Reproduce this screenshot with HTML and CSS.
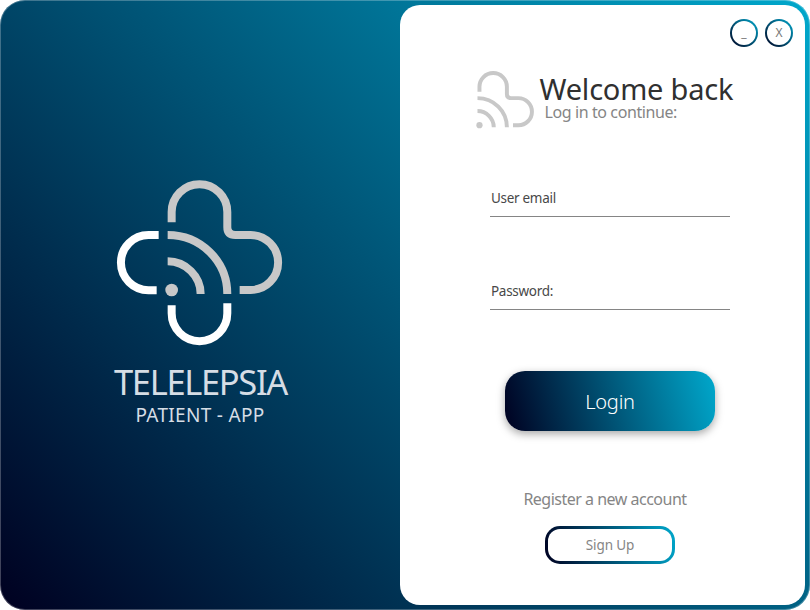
FILE: index.html
```
<!DOCTYPE html>
<html lang="en">
<head>
<meta charset="utf-8">
<title>Telelepsia</title>
<link rel="stylesheet" href="styles.css">
</head>
<body>
<svg width="0" height="0" class="defs">
  <symbol id="mark" viewBox="0 0 350 350" overflow="visible">
    <g fill="none" stroke="currentColor" stroke-width="24">
      <path d="M15 127V96A83.500 83.500 0 0 1 182 96V142Q182 165 206 165H252A82.500 82.500 0 0 1 252 330H219"/>
      <path d="M3 165C102 165 182 243 182 342"/>
      <path d="M3 244C57 244 102 289 102 342"/>
    </g>
    <circle cx="15" cy="330" r="19" fill="currentColor"/>
  </symbol>
</svg>
<div class="window">
  <section class="brand">
    <svg class="logo" viewBox="52 44 496 496">
      <g fill="none" stroke="#fff" stroke-width="24">
        <path d="M177 209H146.500A82.500 82.500 0 0 0 146.500 374.500H171"/>
        <path d="M216 420V444A83.500 83.500 0 0 0 383 444V414"/>
      </g>
      <g class="signal"><use href="#mark" x="201" y="44" width="350" height="350"/></g>
    </svg>
    <h1>TELELEPSIA</h1>
    <p>PATIENT - APP</p>
  </section>
  <main class="panel">
    <div class="controls">
      <button class="circle minimize"><span>_</span></button>
      <button class="circle close"><span>X</span></button>
    </div>
    <header class="welcome">
      <svg class="mini"><use href="#mark"/></svg>
      <div>
        <h2>Welcome back</h2>
        <p>Log in to continue:</p>
      </div>
    </header>
    <form>
      <div class="field"><span class="email">User email</span></div>
      <div class="field"><span class="password">Password:</span></div>
      <button type="button" class="login"><span>Login</span></button>
    </form>
    <p class="register"><span>Register a new account</span></p>
    <button class="signup"><span>Sign Up</span></button>
  </main>
</div>
</body>
</html>
```

FILE: styles.css
```
* { box-sizing: border-box; }
body { margin: 0; background: #fff; font-family: "Noto Sans", "Open Sans", sans-serif; }
h1, h2, p { margin: 0; font-weight: 400; white-space: nowrap; }
button { padding: 0; font-family: inherit; }
svg { display: block; overflow: visible; }
.defs { position: absolute; }
.window {
  display: flex;
  width: 810px;
  height: 610px;
  padding: 5px 5px 5px 0;
  border-radius: 25px;
  background: linear-gradient(47deg, #000020, #00a8cc);
  box-shadow: inset 0 0 0 1px rgba(255,255,255,.25);
}
.brand {
  width: 400px;
  padding-top: 175px;
  display: flex;
  flex-direction: column;
  align-items: center;
  color: #d6dde5;
}
.logo { width: 165.300px; height: 165.300px; }
.signal { color: #c8c8c8; }
.brand h1 { margin-top: 19px; font-size: 34.500px; line-height: 36px; letter-spacing: -1.35px; margin-right: -1px; }
.brand p { font-size: 19px; line-height: 20px; margin-top: 5px; letter-spacing: .3px; }
.panel {
  width: 405px;
  height: 600px;
  border-radius: 20px;
  background: #fff;
  display: flex;
  flex-direction: column;
  align-items: center;
}
.controls { align-self: flex-end; display: flex; gap: 7px; margin: 14px 12px 0 0; }
.circle {
  width: 28px;
  height: 28px;
  border: 2px solid transparent;
  border-radius: 50%;
  background: linear-gradient(#fff, #fff) padding-box, linear-gradient(45deg, #000020, #00a8cc) border-box;
  color: #777;
  font-size: 12px;
  line-height: 24px;
}
.welcome { display: flex; height: 60px; margin: 22px 0 0 9px; width: 260px; }
.mini { width: 57.500px; height: 57.500px; margin: 2px 5px 0 0; color: #c8c8c8; }
.welcome h2 { font-size: 29px; line-height: 28px; margin-top: 6px; color: #303030; letter-spacing: -.2px; }
.welcome p { font-size: 16px; line-height: 16px; margin: 1px 0 0 5px; color: #858585; letter-spacing: -.4px; }
form { width: 240px; margin: 56px 0 0 15px; }
.field { height: 32px; padding: 3px 1px 0; border-bottom: 1px solid #858585; color: #484848; font-size: 13.500px; line-height: 20px; letter-spacing: -.3px; }
.field + .field { margin-top: 61px; }
.login {
  display: block;
  width: 210px;
  height: 60px;
  margin: 61px 0 0 15px;
  border: 0;
  border-radius: 20px;
  background: linear-gradient(75deg, #000020, #00a8cc);
  box-shadow: 0 3px 8px rgba(0,0,0,.35);
  color: #fff;
  font-size: 20px;
  font-weight: 300;
  letter-spacing: -.2px;
}
.register { margin-top: 57px; font-size: 16px; line-height: 22px; color: #858585; margin-left: 5px; letter-spacing: -.5px; }
.signup {
  width: 130px;
  height: 38px;
  margin: 16px 0 0 15px;
  border: 3px solid transparent;
  border-radius: 15px;
  background: linear-gradient(#fff, #fff) padding-box, linear-gradient(75deg, #000020, #00a8cc) border-box;
  color: #858585;
  font-size: 13.500px;
  letter-spacing: -.1px;
}
```
